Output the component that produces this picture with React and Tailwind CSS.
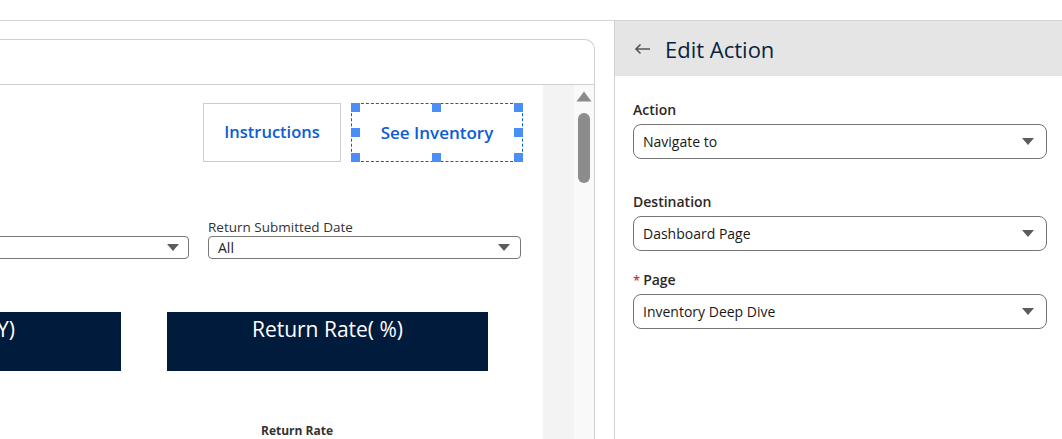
import React from 'react';

const font = { fontFamily: '"Open Sans", "Noto Sans", Arial, sans-serif' };

const Caret = ({ className = '' }) => (
  <svg width="12" height="8" viewBox="0 0 12 8" className={className}>
    <path d="M0 0 H12 L6 7 Z" fill="#5c5c5c" />
  </svg>
);

const Handle = ({ className }) => (
  <span className={`absolute w-[9px] h-[9px] bg-[#4b8ef5] ${className}`} />
);

const PanelSelect = ({ label, value, required }) => (
  <div className="flex flex-col">
    <label className="text-[14px] font-semibold text-[#2b2826] leading-[20px] mb-[4px] flex items-center">
      {required && <span className="text-[#c23934] mr-[3px] text-[13px]">*</span>}
      {label}
    </label>
    <div className="h-[35px] border border-[#747474] rounded-[8px] flex items-center justify-between pl-[9px] pr-[12px] bg-white">
      <span className="text-[14px] text-[#181818]">{value}</span>
      <Caret />
    </div>
  </div>
);

export default function App() {
  return (
    <div className="w-[1062px] h-[439px] overflow-hidden bg-white flex flex-col" style={font}>
      {/* top strip */}
      <div className="h-[21px] border-b border-[#d4d4d4] shrink-0" />

      <div className="flex flex-1 min-h-0">
        {/* dashboard canvas */}
        <div className="w-[614px] pt-[18px] pr-[19px] overflow-hidden">
          <div className="w-[595px] h-[400px] border-t border-r border-[#d0d0d0] rounded-tr-[10px] flex flex-col">
            <div className="h-[45px] border-b border-[#d0d0d0] shrink-0" />
            <div className="flex flex-1 min-h-0">
              <div className="w-[543px] overflow-hidden relative">
                <div className="flex justify-end gap-[10px] pr-[20px] pt-[18px]">
                  <div className="w-[138px] h-[59px] border border-[#cccccc] flex items-center justify-center text-[16.5px] font-semibold text-[#0b5cd5]">
                    Instructions
                  </div>
                  <div className="relative w-[172px] h-[59px] border border-dashed border-[#0b5cd5] flex items-center justify-center text-[17px] font-semibold text-[#0b5cd5]">
                    See Inventory
                    <Handle className="-top-[1px] -left-[1px]" />
                    <Handle className="-top-[1px] left-[80px]" />
                    <Handle className="-top-[1px] -right-[1px]" />
                    <Handle className="top-[24px] -left-[1px]" />
                    <Handle className="top-[24px] -right-[1px]" />
                    <Handle className="-bottom-[1px] -left-[1px]" />
                    <Handle className="-bottom-[1px] left-[80px]" />
                    <Handle className="-bottom-[1px] -right-[1px]" />
                  </div>
                </div>

                {/* filters */}
                <div className="flex gap-[19px] ml-[-123px] mt-[56px] items-end">
                  <div className="w-[312px] h-[23px] border border-[#777] rounded-[4px] flex items-center justify-end pr-[9px]">
                    <Caret />
                  </div>
                  <div className="w-[313px] flex flex-col">
                    <span className="text-[13.5px] text-[#333] leading-[18px]">Return Submitted Date</span>
                    <div className="h-[23px] border border-[#777] rounded-[4px] flex items-center justify-between pl-[9px] pr-[10px]">
                      <span className="text-[14px] text-[#222]">All</span>
                      <Caret />
                    </div>
                  </div>
                </div>

                {/* KPI headers */}
                <div className="flex gap-[46px] ml-[-200px] mt-[53px]">
                  <div className="w-[321px] h-[59px] bg-[#011b3d] text-white text-[21px] text-right pr-[106px] pt-[2px]">
                    (QTY)
                  </div>
                  <div className="w-[321px] h-[59px] bg-[#011b3d] text-white text-[21px] text-center pt-[2px]">
                    Return Rate( %)
                  </div>
                </div>

                <div className="w-[594px] text-center text-[12px] font-bold text-[#333] mt-[51px]">
                  Return Rate
                </div>
              </div>

              <div className="w-[31px] bg-[#f3f3f3]" />
              <div className="w-[20px] bg-[#f9f9f9] flex flex-col items-center pt-[6px]">
                <svg width="16" height="11" viewBox="0 0 16 11">
                  <path d="M8 0.5 L15.5 10.5 H0.5 Z" fill="#8a8a8a" strokeLinejoin="round" />
                </svg>
                <div className="w-[12px] h-[70px] rounded-full bg-[#8c8c8c] mt-[11px]" />
              </div>
            </div>
          </div>
        </div>

        {/* edit action panel */}
        <div className="flex-1 border-l border-[#d0d0d0] flex flex-col">
          <div className="h-[55px] bg-[#e5e5e5] flex items-center pl-[19px]">
            <svg width="17" height="12" viewBox="0 0 17 12" className="mr-[14px]">
              <path d="M16 6 H2 M6.5 1.5 L2 6 L6.5 10.5" stroke="#555" strokeWidth="1.6" fill="none" />
            </svg>
            <span className="text-[22px] text-[#0b1f3f] leading-none">Edit Action</span>
          </div>
          <div className="pl-[18px] pr-[15px] pt-[24px] flex flex-col">
            <PanelSelect label="Action" value="Navigate to" />
            <div className="mt-[33px]">
              <PanelSelect label="Destination" value="Dashboard Page" />
            </div>
            <div className="mt-[19px]">
              <PanelSelect label="Page" value="Inventory Deep Dive" required />
            </div>
          </div>
        </div>
      </div>
    </div>
  );
}
